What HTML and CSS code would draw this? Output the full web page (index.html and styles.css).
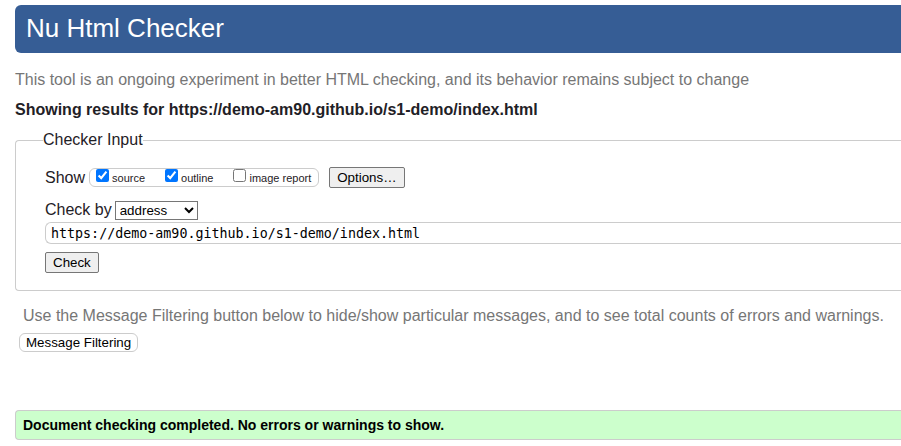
FILE: index.html
```html
<!DOCTYPE html>
<html lang="en">
<head>
<meta charset="utf-8">
<title>Nu Html Checker</title>
<link rel="stylesheet" href="styles.css">
</head>
<body>
<header class="banner"><h1>Nu Html Checker</h1></header>
<main>
<p class="note">This tool is an ongoing experiment in better HTML checking, and its behavior remains subject to change</p>
<h2 class="results-title">Showing results for https://demo-am90.github.io/s1-demo/index.html</h2>
<form>
<fieldset class="checker">
<legend>Checker Input</legend>
<div class="row show-row">
<span>Show</span>
<div class="show-options">
<label><input type="checkbox" checked><span>source</span></label>
<label><input type="checkbox" checked><span>outline</span></label>
<label><input type="checkbox"><span>image report</span></label>
</div>
<button class="button options-button" type="button">Options…</button>
</div>
<div class="row method-row">
<label for="method">Check by</label>
<select id="method"><option>address</option><option>file upload</option><option>text input</option></select>
</div>
<input class="address" type="url" aria-label="Address" value="https://demo-am90.github.io/s1-demo/index.html">
<button class="button" type="submit">Check</button>
</fieldset>
</form>
<section class="filtering">
<p class="note">Use the Message Filtering button below to hide/show particular messages, and to see total counts of errors and warnings.</p>
<button class="filter-button" type="button">Message Filtering</button>
</section>
<p class="success">Document checking completed. No errors or warnings to show.</p>
</main>
</body>
</html>
```
FILE: styles.css
```css
* {
  box-sizing: border-box;
}

body {
  margin: 0;
  padding: 5px 0 0 15px;
  background: #fff;
  color: #1f2126;
  font: 16px/20px "Liberation Sans", Arial, sans-serif;
}

.banner {
  padding: 8px 11px 10px;
  border-radius: 6px 0 0 6px;
  background: #365d95;
  color: #fff;
}

h1 {
  margin: 0;
  font-size: 26px;
  font-weight: normal;
  line-height: 30px;
}

.note {
  margin: 0;
  color: #767676;
}

main {
  padding-top: 17px;
}

.results-title {
  margin: 10px 0;
  font-size: 16px;
}

.checker {
  min-width: 0;
  margin: 0;
  padding: 17px 0 17px 29px;
  border: 1px solid #ccc;
  border-right: 0;
  border-radius: 4px 0 0 4px;
}

.checker legend {
  margin-left: -2px;
  padding: 0;
}

.row {
  display: flex;
  align-items: center;
  gap: 4px;
}

.show-row {
  margin-bottom: 12px;
}

.method-row {
  gap: 3px;
}

.show-options {
  display: flex;
  gap: 20px;
  height: 19px;
  padding: 0 7px 0 6px;
  border: 1px solid #ccc;
  border-radius: 6px;
  font-size: 11px;
  line-height: 19px;
}

.show-options label {
  display: flex;
  gap: 3px;
}

.show-options input {
  width: 13px;
  height: 13px;
  margin: 0;
}

.button {
  height: 21px;
  padding: 1px 7px;
  border: 1px solid #767676;
  border-radius: 2px;
  background: #efefef;
  color: #000;
  font-family: "Liberation Sans", Arial, sans-serif;
}

.options-button {
  margin-left: 6px;
}

select {
  height: 19px;
  width: 83px;
  border: 1px solid #767676;
  border-radius: 0;
  background: #fff;
  color: #000;
  font-family: "Liberation Sans", Arial, sans-serif;
}

.address {
  display: block;
  width: 100%;
  height: 22px;
  margin: 2px 0 8px;
  padding: 1px 5px;
  border: 1px solid #ccc;
  border-right: 0;
  border-radius: 6px 0 0 6px;
  background: #fff;
  color: #000;
  font-family: "DejaVu Sans Mono", monospace;
}

.filtering {
  padding: 15px 4px 0;
}

.filtering .note {
  margin: 0 4px 7px;
}

.filter-button {
  display: block;
  height: 19px;
  padding: 0 6px;
  border: 1px solid #ccc;
  border-radius: 6px;
  background: #fff;
  color: #000;
  font-family: "Liberation Sans", Arial, sans-serif;
}

.success {
  margin: 58px 0 0;
  padding: 4px 7px;
  border: 1px solid #ccc;
  border-right: 0;
  border-radius: 4px 0 0 4px;
  background: #cfc;
  color: #000;
  font-size: 14px;
  font-weight: bold;
}
```
